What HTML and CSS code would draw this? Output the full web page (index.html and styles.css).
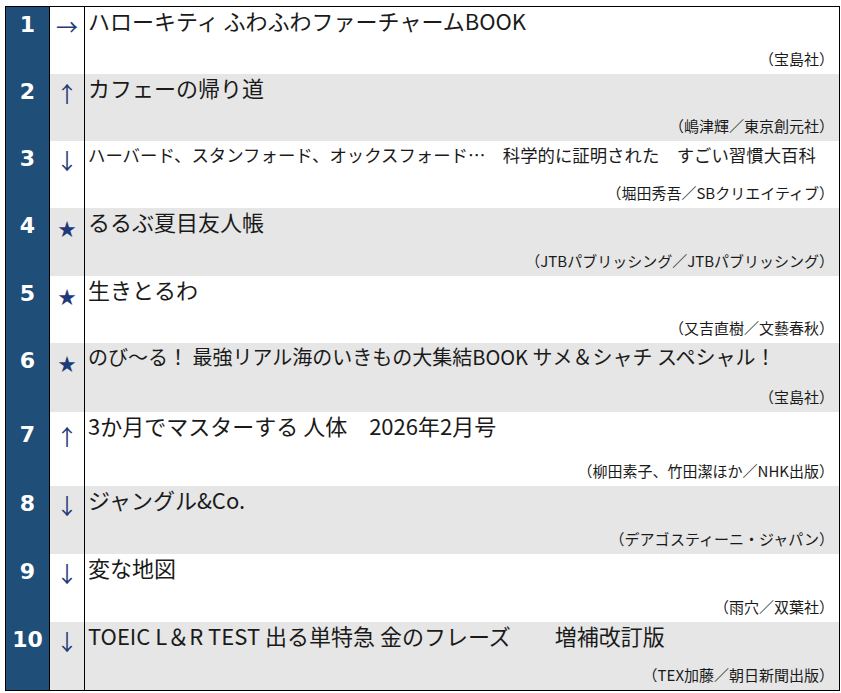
FILE: index.html
```html
<!DOCTYPE html>
<html lang="ja">
<head>
<meta charset="utf-8">
<title>ランキング</title>
<link rel="stylesheet" href="styles.css">
</head>
<body>
<div class="ranking">
  <div class="row">
    <div class="rank">1</div><div class="move">→</div>
    <div class="book"><div class="title">ハローキティ ふわふわファーチャームBOOK</div><div class="author">（宝島社）</div></div>
  </div>
  <div class="row alt">
    <div class="rank">2</div><div class="move">↑</div>
    <div class="book"><div class="title">カフェーの帰り道</div><div class="author">（嶋津輝／東京創元社）</div></div>
  </div>
  <div class="row">
    <div class="rank">3</div><div class="move">↓</div>
    <div class="book"><div class="title small">ハーバード、スタンフォード、オックスフォード…　科学的に証明された　すごい習慣大百科</div><div class="author">（堀田秀吾／SBクリエイティブ）</div></div>
  </div>
  <div class="row alt">
    <div class="rank">4</div><div class="move star">★</div>
    <div class="book"><div class="title">るるぶ夏目友人帳</div><div class="author">（JTBパブリッシング／JTBパブリッシング）</div></div>
  </div>
  <div class="row">
    <div class="rank">5</div><div class="move star">★</div>
    <div class="book"><div class="title">生きとるわ</div><div class="author">（又吉直樹／文藝春秋）</div></div>
  </div>
  <div class="row alt">
    <div class="rank">6</div><div class="move star">★</div>
    <div class="book"><div class="title medium">のび～る！ 最強リアル海のいきもの大集結BOOK サメ＆シャチ スペシャル！</div><div class="author">（宝島社）</div></div>
  </div>
  <div class="row tall">
    <div class="rank">7</div><div class="move">↑</div>
    <div class="book"><div class="title">3か月でマスターする 人体　2026年2月号</div><div class="author">（柳田素子、竹田潔ほか／NHK出版）</div></div>
  </div>
  <div class="row alt">
    <div class="rank">8</div><div class="move">↓</div>
    <div class="book"><div class="title">ジャングル&amp;Co.</div><div class="author">（デアゴスティーニ・ジャパン）</div></div>
  </div>
  <div class="row">
    <div class="rank">9</div><div class="move">↓</div>
    <div class="book"><div class="title">変な地図</div><div class="author">（雨穴／双葉社）</div></div>
  </div>
  <div class="row alt">
    <div class="rank">10</div><div class="move">↓</div>
    <div class="book"><div class="title">TOEIC L＆R TEST 出る単特急 金のフレーズ　　増補改訂版</div><div class="author">（TEX加藤／朝日新聞出版）</div></div>
  </div>
</div>
</body>
</html>
```
FILE: styles.css
```css
* { box-sizing: border-box; }

body {
  margin: 0;
  padding: 6px 0 0 5px;
  background: #ffffff;
  font-family: "Noto Sans CJK JP", "Noto Sans", sans-serif;
  color: #1a1a1a;
}

.ranking {
  width: 835px;
  border: 1px solid #000000;
  display: grid;
  grid-template-columns: 44px 35px 1fr;
  grid-template-rows: 67px 67px 67px 68px 67px 69px 74px 68px 68px 68px;
}

.row { display: contents; }

.rank {
  background: #1f4e79;
  color: #ffffff;
  border-right: 1px solid #000000;
  font-family: "DejaVu Sans", sans-serif;
  font-weight: bold;
  font-size: 22px;
  line-height: 26px;
  text-align: center;
  padding-top: 5px;
}

.move {
  border-right: 1px solid #000000;
  color: #1f3a78;
  font-family: "Noto Sans CJK JP", sans-serif;
  font-size: 22px;
  line-height: 26px;
  text-align: center;
  padding-top: 5px;
}

.move.star { font-size: 18px; padding-top: 7px; }

.tall .rank, .tall .move { padding-top: 10px; }

.alt .move, .alt .book { background: #e6e6e6; }

.book {
  display: flex;
  flex-direction: column;
  justify-content: space-between;
  padding: 0 5px 5px 3px;
  min-width: 0;
}

.title {
  font-size: 22px;
  line-height: 27px;
  white-space: nowrap;
}

.title.small { font-size: 17.4px; }
.title.medium { font-size: 20px; }

.author {
  font-size: 15px;
  line-height: 20px;
  text-align: right;
  white-space: nowrap;
}
```
